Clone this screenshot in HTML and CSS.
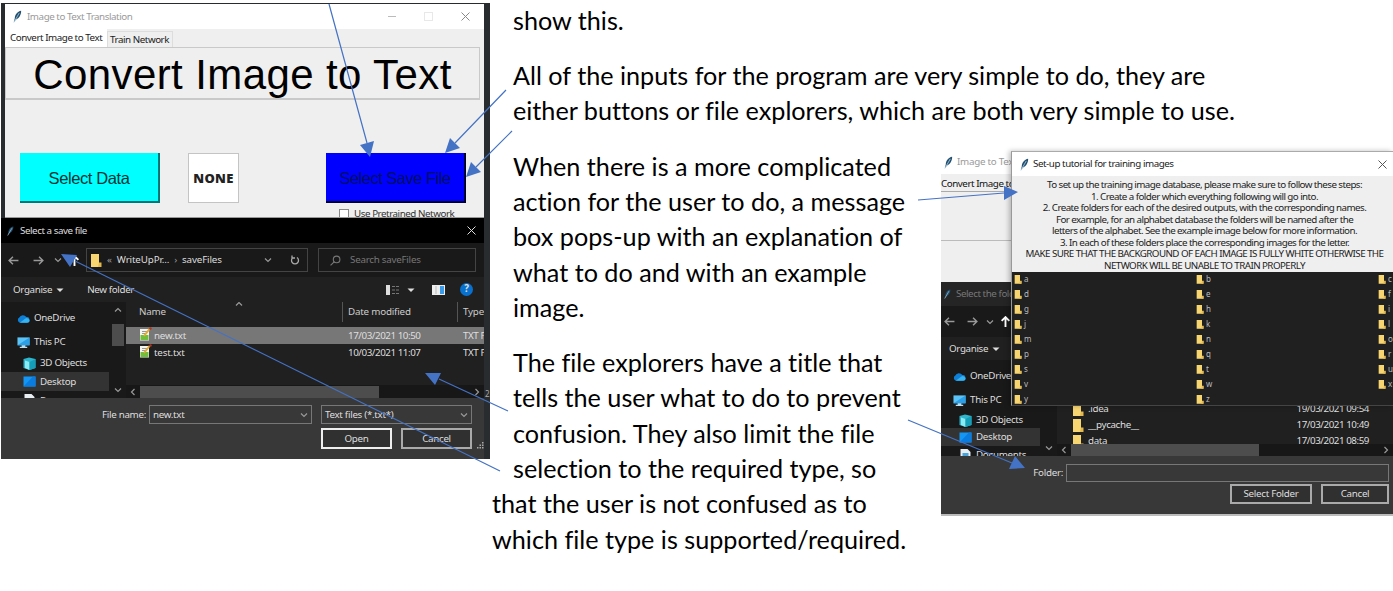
FILE: index.html
```
<!DOCTYPE html>
<html lang="en">
<head>
<meta charset="utf-8">
<title>Image to Text Translation</title>
<link rel="stylesheet" href="styles.css">
</head>
<body>
<svg class="defs" width="0" height="0">
  <defs>
    <symbol id="feather" viewBox="0 0 10 14"><path d="M1 13 2 9C2 5 5 1 9 0.500C9.500 4 7 9 3 10.500Z" fill="#24506f"/><path d="M1 13.500 7 3" stroke="#9fc4dd" stroke-width="1" fill="none"/></symbol>
    <symbol id="folder" viewBox="0 0 12 14"><path d="M1 1h8v9h2v4H1z" fill="#f7d671"/><path d="M9 9.500h2.500V14H8z" fill="#e3b94f"/></symbol>
    <symbol id="cloud" viewBox="0 0 14 9"><path d="M3 9a3 3 0 0 1-.5-5.500A4.200 4.200 0 0 1 10 3a3 3 0 0 1 1 6z" fill="#0f7fd6"/><path d="M3 9 9 4.500a3 3 0 0 1 4.500 2.500Q13.500 9 11 9z" fill="#36b4f2"/></symbol>
    <symbol id="pc" viewBox="0 0 14 12"><path d="M0.500 0.500h13v8.500H.5z" fill="#5cc3f7"/><path d="M.5 9 13.500.5V9z" fill="#2ba0ea"/><path d="M5 9h4v1.500h2V12H3v-1.500h2z" fill="#b9dff2"/></symbol>
    <symbol id="cube" viewBox="0 0 13 13"><path d="M.5 2 6 .5l6.500 1.500v9L6.500 13 .5 11z" fill="#2fb6cd"/><path d="M2 3.500 6.500 5v8L2 11z" fill="#8ceaf2"/><path d="M6.500 5 12.500 2v9l-6 2z" fill="#159eb8"/></symbol>
    <symbol id="desk" viewBox="0 0 13 10"><path d="M.5 0h12v10H.5z" fill="#1496f5"/><path d="M.5 10 10 0h2.500v10z" fill="#0a7bdf"/></symbol>
    <symbol id="doc" viewBox="0 0 12 13"><path d="M1 0h7l3 3v10H1z" fill="#e9eef2"/><path d="M3 4h6v5H3z" fill="#4aa3d9"/></symbol>
    <symbol id="note" viewBox="0 0 13 14"><path d="M1 2h9v11.500H1z" fill="#f3f5ee"/><path d="M1.500 8h8v5h-8z" fill="#6fbf3a"/><path d="M3 4.500h5M3 6.500h4" stroke="#999"/><path d="M5 9 10.500 2" stroke="#e2a936" stroke-width="2"/><circle cx="11.500" cy="1.500" r="1.200" fill="#b63224"/></symbol>
    <symbol id="left" viewBox="0 0 10 10"><path d="M9.500 5H1M4.500 1.500 1 5l3.500 3.500" fill="none" stroke="currentColor" stroke-width="1.300"/></symbol>
    <symbol id="right" viewBox="0 0 10 10"><path d="M.5 5H9M5.500 1.500 9 5 5.500 8.500" fill="none" stroke="currentColor" stroke-width="1.300"/></symbol>
    <symbol id="up" viewBox="0 0 10 10"><path d="M5 10V1M1.500 4.500 5 1l3.500 3.500" fill="none" stroke="currentColor" stroke-width="1.700"/></symbol>
    <symbol id="chev" viewBox="0 0 8 8"><path d="M1 2.500 4 5.500 7 2.500" fill="none" stroke="currentColor" stroke-width="1.200"/></symbol>
    <symbol id="tri" viewBox="0 0 8 8"><path d="M.5 2.500h7L4 6z" fill="currentColor"/></symbol>
    <symbol id="x" viewBox="0 0 9 9"><path d="M.5.5l8 8M8.500.5l-8 8" fill="none" stroke="currentColor"/></symbol>
  </defs>
</svg>
<main class="page">
  <figure class="shot shot-left">
    <section class="app">
      <header class="app-title"><svg class="feather"><use href="#feather"/></svg><span>Image to Text Translation</span>
        <div class="controls"><i class="minimise"></i><i class="maximise"></i><svg class="close"><use href="#x"/></svg></div></header>
      <nav class="tabs"><span class="tab active">Convert Image to Text</span><span class="tab">Train Network</span></nav>
      <h1 class="app-heading">Convert Image to Text</h1>
      <div class="app-actions">
        <div class="big-button cyan">Select Data</div>
        <div class="none">NONE</div>
        <div class="big-button blue">Select Save File</div>
      </div>
      <div class="pretrained"><i class="checkbox"></i><span>Use Pretrained Network</span></div>
    </section>
    <section class="dialog">
      <header class="dialog-title"><svg class="feather"><use href="#feather"/></svg><span>Select a save file</span><svg class="close"><use href="#x"/></svg></header>
      <div class="address">
        <svg class="nav-icon"><use href="#left"/></svg><svg class="nav-icon fwd"><use href="#right"/></svg><svg class="chev"><use href="#chev"/></svg><svg class="nav-icon upward"><use href="#up"/></svg>
        <div class="path"><svg class="path-folder"><use href="#folder"/></svg><span class="dim">«</span><span class="crumb">WriteUpPr...</span><span class="dim">›</span><span class="crumb">saveFiles</span><svg class="chev path-chev"><use href="#chev"/></svg>
          <svg class="refresh" viewBox="0 0 10 10"><path d="M3 2.500A3.500 3.500 0 1 0 7 2.500M2 .5V3h3" fill="none" stroke="currentColor" stroke-width="1.300"/></svg></div>
        <div class="search"><svg class="lens" viewBox="0 0 10 10"><circle cx="6" cy="4" r="3" fill="none" stroke="currentColor"/><path d="M4 6 .5 9.500" stroke="currentColor"/></svg><span>Search saveFiles</span></div>
      </div>
      <div class="toolbar"><span class="organise">Organise</span><svg class="tri"><use href="#tri"/></svg><span class="new-folder">New folder</span>
        <div class="tools"><svg class="list-icon" viewBox="0 0 14 10"><path d="M0 0h4v10H0z" fill="#ddd"/><path d="M6 1.500h3M10 1.500h3M6 5h3M10 5h3M6 8.500h3M10 8.500h3" stroke="#777"/></svg><svg class="tri"><use href="#tri"/></svg><svg class="pane-icon" viewBox="0 0 13 10"><path d="M0 0h13v10H0z" fill="#eee"/><path d="M8 1h4v8H8z" fill="#3b9be6"/><path d="M4 1v8" stroke="#bbb"/></svg><b class="help">?</b></div></div>
      <div class="browser">
        <div class="tree">
          <div class="tree-row one"><svg class="ico"><use href="#cloud"/></svg>OneDrive</div>
          <div class="tree-row pc-row"><svg class="ico"><use href="#pc"/></svg>This PC</div>
          <div class="tree-row child"><svg class="ico"><use href="#cube"/></svg>3D Objects</div>
          <div class="tree-row child selected"><svg class="ico"><use href="#desk"/></svg>Desktop</div>
          <div class="tree-row child"><svg class="ico"><use href="#doc"/></svg>Documents</div>
        </div>
        <div class="vscroll"><svg class="chev flip"><use href="#chev"/></svg><i class="vthumb"></i><svg class="chev last"><use href="#chev"/></svg></div>
        <div class="files">
          <div class="file-head"><span>Name</span><span class="rule">Date modified</span><span class="rule">Type</span><svg class="chev flip sort"><use href="#chev"/></svg></div>
          <div class="file-row picked"><span class="fname"><svg class="note"><use href="#note"/></svg>new.txt</span><span>17/03/2021 10:50</span><span>TXT F</span></div>
          <div class="file-row"><span class="fname"><svg class="note"><use href="#note"/></svg>test.txt</span><span>10/03/2021 11:07</span><span>TXT F</span></div>
          <div class="hscroll"><svg class="chev west"><use href="#chev"/></svg><i class="hthumb"></i><svg class="chev east"><use href="#chev"/></svg></div>
        </div>
      </div>
      <footer class="dialog-footer">
        <div class="field-row"><label>File name:</label><div class="field name-field">new.txt<svg class="chev"><use href="#chev"/></svg></div><div class="field type-field">Text files (*.txt*)<svg class="chev"><use href="#chev"/></svg></div></div>
        <div class="button-row"><span class="btn primary">Open</span><span class="btn">Cancel</span><svg class="grip" viewBox="0 0 7 7"><path d="M5 0h1.500v1.500H5zM2.500 2.500H4V4H2.500zM5 2.500h1.500V4H5zM0 5h1.500v1.500H0zM2.500 5H4v1.500H2.500zM5 5h1.500v1.500H5z" fill="#aaa"/></svg></div>
      </footer>
    </section>
    <span class="stray">2</span>
  </figure>

  <div class="content">
    <article class="wide">
      <p><span class="ln">show this.</span></p>
      <p><span class="ln">All of the inputs for the program are very simple to do, they are</span><span class="ln">either buttons or file explorers, which are both very simple to use.</span></p>
    </article>
    <div class="lower">
      <article class="narrow">
        <p><span class="ln">When there is a more complicated</span><span class="ln">action for the user to do, a message</span><span class="ln">box pops-up with an explanation of</span><span class="ln">what to do and with an example</span><span class="ln">image.</span></p>
        <p><span class="ln">The file explorers have a title that</span><span class="ln">tells the user what to do to prevent</span><span class="ln">confusion. They also limit the file</span><span class="ln">selection to the required type, so</span><span class="ln outdent">that the user is not confused as to</span><span class="ln outdent">which file type is supported/required.</span></p>
      </article>
      <figure class="shot shot-right">
        <section class="app-behind">
          <header class="app-title"><svg class="feather"><use href="#feather"/></svg><span>Image to Text</span></header>
          <div class="behind-tab">Convert Image to</div>
          <div class="behind-box"></div>
        </section>
        <section class="dialog folder-dialog">
          <header class="dialog-title"><svg class="feather"><use href="#feather"/></svg><span>Select the folder</span></header>
          <div class="address"><svg class="nav-icon"><use href="#left"/></svg><svg class="nav-icon fwd"><use href="#right"/></svg><svg class="chev"><use href="#chev"/></svg><svg class="nav-icon upward"><use href="#up"/></svg></div>
          <div class="toolbar"><span class="organise">Organise</span><svg class="tri"><use href="#tri"/></svg></div>
          <div class="browser">
            <div class="tree">
              <div class="tree-row one"><svg class="ico"><use href="#cloud"/></svg>OneDrive</div>
              <div class="tree-row pc-row"><svg class="ico"><use href="#pc"/></svg>This PC</div>
              <div class="tree-row child"><svg class="ico"><use href="#cube"/></svg>3D Objects</div>
              <div class="tree-row child selected"><svg class="ico"><use href="#desk"/></svg>Desktop</div>
              <div class="tree-row child"><svg class="ico"><use href="#doc"/></svg>Documents</div>
            </div>
            <div class="vscroll"><svg class="chev last"><use href="#chev"/></svg></div>
            <div class="files">
              <div class="folder-row"><svg class="dir"><use href="#folder"/></svg><span>.idea</span><span class="date">19/03/2021 09:54</span></div>
              <div class="folder-row"><svg class="dir"><use href="#folder"/></svg><span>__pycache__</span><span class="date">17/03/2021 10:49</span></div>
              <div class="folder-row"><svg class="dir"><use href="#folder"/></svg><span>data</span><span class="date">17/03/2021 08:59</span></div>
              <div class="hscroll"><svg class="chev west"><use href="#chev"/></svg><i class="hthumb"></i><svg class="chev east"><use href="#chev"/></svg></div>
            </div>
          </div>
          <footer class="dialog-footer">
            <div class="field-row"><label>Folder:</label><div class="field"></div></div>
            <div class="button-row"><span class="btn select-folder">Select Folder</span><span class="btn">Cancel</span></div>
          </footer>
        </section>
        <section class="popup">
          <header class="popup-title"><svg class="feather"><use href="#feather"/></svg><span>Set-up tutorial for training images</span><svg class="close"><use href="#x"/></svg></header>
          <div class="steps">
            <span>To set up the training image database, please make sure to follow these steps:</span>
            <span>1. Create a folder which everything following will go into.</span>
            <span>2. Create folders for each of the desired outputs, with the corresponding names.</span>
            <span>For example, for an alphabet database the folders will be named after the</span>
            <span>letters of the alphabet. See the example image below for more information.</span>
            <span>3. In each of these folders place the corresponding images for the letter.</span>
            <span class="caps">MAKE SURE THAT THE BACKGROUND OF EACH IMAGE IS FULLY WHITE OTHERWISE THE</span>
            <span class="caps">NETWORK WILL BE UNABLE TO TRAIN PROPERLY</span>
          </div>
          <div class="letters">
            <span><svg><use href="#folder"/></svg>a</span><span><svg><use href="#folder"/></svg>b</span><span><svg><use href="#folder"/></svg>c</span>
            <span><svg><use href="#folder"/></svg>d</span><span><svg><use href="#folder"/></svg>e</span><span><svg><use href="#folder"/></svg>f</span>
            <span><svg><use href="#folder"/></svg>g</span><span><svg><use href="#folder"/></svg>h</span><span><svg><use href="#folder"/></svg>i</span>
            <span><svg><use href="#folder"/></svg>j</span><span><svg><use href="#folder"/></svg>k</span><span><svg><use href="#folder"/></svg>l</span>
            <span><svg><use href="#folder"/></svg>m</span><span><svg><use href="#folder"/></svg>n</span><span><svg><use href="#folder"/></svg>o</span>
            <span><svg><use href="#folder"/></svg>p</span><span><svg><use href="#folder"/></svg>q</span><span><svg><use href="#folder"/></svg>r</span>
            <span><svg><use href="#folder"/></svg>s</span><span><svg><use href="#folder"/></svg>t</span><span><svg><use href="#folder"/></svg>u</span>
            <span><svg><use href="#folder"/></svg>v</span><span><svg><use href="#folder"/></svg>w</span><span><svg><use href="#folder"/></svg>x</span>
            <span><svg><use href="#folder"/></svg>y</span><span><svg><use href="#folder"/></svg>z</span>
          </div>
        </section>
      </figure>
    </div>
  </div>
  <svg class="arrows" viewBox="0 0 1393 591">
    <g fill="none" stroke="#4472c4" stroke-width="1.200">
      <path d="M329 4 367 143M506 90 455 143M512 131 476 167M918 200 1004 193M508 411 439 379M500 471 75 261M908 420 1012 463"/>
    </g>
    <g fill="#4472c4">
      <path d="M370 157 360 145 374 141ZM445 153 450 138 460 148ZM466 177 471 162 481 172ZM1018 192 1004 186 1004 200ZM425 373 441 373 435 385ZM61 254 77 255 70 267ZM1025 468 1015 456 1009 469Z"/>
    </g>
  </svg>
</main>
</body>
</html>
```
FILE: styles.css
```
* { box-sizing: border-box; }
body { margin: 0; background: #fff; }
svg { display: block; flex: none; }
.defs { position: absolute; }
figure, p, h1 { margin: 0; }
.page { position: relative; display: flex; width: 1393px; height: 591px; overflow: hidden; }
.shot { font: 9.800px/12px "Noto Sans", "Open Sans", sans-serif; letter-spacing: -0.450px; white-space: nowrap; flex: none; }
.arrows { position: absolute; inset: 0; width: 1393px; height: 591px; }

/* document text */
.content { flex: none; width: 903px; padding-top: 3px; }
.wide, .narrow { font: 25.200px/35.400px Lato, sans-serif; font-variant-ligatures: none; color: #000; white-space: nowrap; }
.wide { height: 147px; padding-left: 23px; }
.wide p, .narrow p { margin-bottom: 19.200px; }
.ln { display: block; }
.lower { display: flex; }
.narrow { width: 451px; padding-left: 23px; margin-top: -1.500px; }
.outdent { margin-left: -21px; }

/* left capture */
.shot-left { position: relative; width: 490px; height: 456px; margin-top: 3px; border-left: 1px solid #fff; background: #292c2e; padding-top: 1px; }
.app { width: 479px; height: 214px; margin-left: 4px; background: #efefef; border-bottom: 1px solid #999; overflow: hidden; }
.app-title { display: flex; align-items: center; height: 25px; background: #fff; color: #9a9a9a; padding-left: 8px; }
.feather { width: 9px; height: 13px; margin-right: 5px; }
.controls { display: flex; align-items: center; gap: 28px; margin-left: auto; padding-right: 14px; color: #888; }
.minimise { width: 8px; height: 1px; background: #bbb; }
.maximise { width: 9px; height: 9px; border: 1px solid #e8e8e8; }
.close { width: 9px; height: 9px; }
.tabs { display: flex; align-items: flex-end; height: 18px; color: #222; }
.tab { height: 16px; padding: 2px 3px 0 2px; border: 1px solid #ddd; border-bottom: 0; }
.tab.active { height: 18px; background: #fff; border: 0; width: 102px; padding: 3px 0 0 5px; }
.app-heading { width: 475px; height: 53px; border: 2px solid #c9c9c9; border-width: 1px 1px 2px; font: 42px/53px "Liberation Sans", sans-serif; letter-spacing: 0.400px; text-align: center; color: #000; }
.app-actions { display: flex; padding: 53px 0 0 15px; }
.big-button { width: 140px; height: 50px; font: 16.500px/50px "Liberation Sans", sans-serif; letter-spacing: -0.400px; text-align: center; border: 1px solid #077; border-width: 0 2px 2px 0; }
.cyan { background: #0ff; color: #033; }
.blue { background: #00f; color: #001060; border-color: #003; margin-left: 87px; letter-spacing: -0.500px; }
.none { width: 51px; height: 50px; margin-left: 28px; background: #fff; border: 1px solid #c4c4c4; font: 800 13px/49px "Open Sans", sans-serif; color: #222; text-align: center; letter-spacing: 0.300px; }
.pretrained { display: flex; padding: 5px 0 0 334px; color: #333; }
.checkbox { width: 10px; height: 10px; margin: 1px 5px 0 0; background: #fff; border: 1px solid #888; }
.stray { position: absolute; left: 484px; top: 385px; color: #aaa; font-size: 8px; }

/* file dialogs */
.dialog { width: 483px; height: 241px; background: #202020; color: #dedede; overflow: hidden; }
.dialog-title { display: flex; align-items: center; height: 25px; background: #000; padding: 0 8px 0 6px; }
.dialog-title .feather { width: 7px; height: 10px; margin-right: 6px; }
.dialog-title .close { margin-left: auto; }
.address { display: flex; align-items: center; height: 34px; background: #191919; padding-left: 7px; color: #999; }
.nav-icon { width: 11px; height: 11px; }
.fwd { margin: 0 10px 0 14px; }
.chev { width: 8px; height: 8px; color: #999; }
.upward { margin-left: 7px; margin-right: 6px; color: #fff; }
.path { display: flex; align-items: center; width: 222px; height: 24px; border: 1px solid #444; padding-left: 3px; gap: 5px; color: #ddd; letter-spacing: -0.150px; }
.path-folder { width: 12px; height: 14px; }
.dim { color: #999; }
.path-chev { margin-left: auto; }
.refresh { width: 10px; height: 10px; margin: 0 7px 0 13px; color: #aaa; }
.search { display: flex; align-items: center; width: 158px; height: 24px; border: 1px solid #444; margin-left: 10px; padding-left: 11px; gap: 9px; color: #777; letter-spacing: -0.250px; }
.lens { width: 11px; height: 11px; }
.toolbar { display: flex; align-items: center; height: 25px; padding-left: 12px; letter-spacing: -0.350px; }
.tri { width: 8px; height: 8px; margin-left: 4px; }
.new-folder { margin-left: 23px; }
.tools { display: flex; align-items: center; margin-left: auto; padding-right: 11px; }
.list-icon { width: 14px; height: 10px; margin-right: 3px; }
.pane-icon { width: 13px; height: 10px; margin: 0 15px 0 17px; }
.help { width: 13px; height: 13px; border-radius: 50%; background: #0870cf; text-align: center; }
.browser { display: flex; height: 96px; overflow: hidden; }
.tree { width: 108px; background: #191919; padding-top: 6px; flex: none; }
.tree-row { display: flex; align-items: center; height: 19px; padding-left: 16px; gap: 4px; letter-spacing: -0.300px; }
.one { height: 20px; }
.pc-row { height: 28px; }
.pc-row + .child { height: 14px; margin-bottom: 2px; }
.child { padding-left: 22px; }
.selected { background: #333; }
.ico { width: 13px; height: 13px; }
.vscroll { width: 17px; background: #191919; display: flex; flex-direction: column; align-items: center; padding: 4px 0; flex: none; }
.vthumb { width: 12px; height: 22px; margin-top: 10px; background: #4d4d4d; }
.last { margin-top: auto; }
.flip { transform: rotate(180deg); }
.west { transform: rotate(90deg); }
.east { transform: rotate(-90deg); margin-left: auto; }
.files { flex: 1; display: flex; flex-direction: column; overflow: hidden; }
.file-head, .file-row { display: grid; grid-template-columns: 209px 115px 30px; padding-left: 13px; flex: none; }
.file-head { position: relative; height: 25px; line-height: 20px; color: #ccc; letter-spacing: -0.200px; }
.rule { border-left: 1px solid #555; height: 20px; padding-left: 5px; margin-left: -6px; }
.sort { position: absolute; left: 109px; top: -2px; }
.file-row { height: 17px; line-height: 17px; }
.picked { background: #777; }
.fname { display: flex; gap: 2px; letter-spacing: -0.200px; }
.note { width: 13px; height: 14px; }
.hscroll { display: flex; align-items: center; height: 13px; background: #171717; margin-top: auto; padding: 0 3px; }
.hthumb { width: 239px; height: 12px; background: #4d4d4d; margin-left: 3px; }
.dialog-footer { height: 61px; background: #383838; padding-top: 7px; }
.field-row { display: flex; align-items: center; height: 19px; letter-spacing: -0.300px; }
.field-row label { width: 148px; text-align: right; padding-right: 3px; }
.field { display: flex; align-items: center; justify-content: space-between; height: 19px; border: 1px solid #777; padding: 0 3px; }
.name-field { width: 163px; }
.type-field { width: 151px; margin-left: 9px; }
.button-row { display: flex; gap: 9px; padding: 4px 0 0 320px; letter-spacing: -0.300px; }
.btn { width: 71px; height: 21px; border: 2px solid #aaa; background: #303030; line-height: 17px; text-align: center; }
.primary { border-color: #eee; }
.grip { width: 7px; height: 7px; margin-top: 14px; margin-left: -4px; }

/* right capture */
.shot-right { position: relative; width: 452px; height: 366px; background: #bbb; }
.app-behind { height: 132px; background: #efefef; }
.app-behind .app-title { height: 24px; padding-left: 3px; letter-spacing: -0.250px; }
.app-behind .feather { margin-right: 4px; }
.behind-tab { height: 18px; padding-top: 4px; border-bottom: 1px solid #aaa; color: #111; }
.behind-box { height: 49px; border-bottom: 1px solid #bbb; }
.folder-dialog { width: 452px; height: 232px; }
.folder-dialog .dialog-title { height: 24px; background: #252525; color: #777; padding-left: 3px; }
.folder-dialog .dialog-title .feather { margin-right: 5px; }
.folder-dialog .address { height: 31px; padding-left: 3px; }
.folder-dialog .fwd { margin: 0 8px 0 12px; }
.folder-dialog .upward { margin-left: 6px; }
.folder-dialog .toolbar { height: 23px; padding-left: 8px; }
.folder-dialog .browser { height: 96px; }
.folder-dialog .tree { width: 99px; }
.folder-dialog .tree-row { height: 18px; padding-left: 12px; }
.folder-dialog .one { height: 20px; }
.folder-dialog .pc-row { height: 28px; }
.folder-dialog .pc-row + .child { height: 12px; }
.folder-dialog .tree-row.child { padding-left: 18px; }
.folder-dialog .files { padding-top: 41px; }
.folder-row { display: flex; align-items: center; height: 16px; padding-left: 15px; gap: 4px; flex: none; letter-spacing: -0.350px; }
.dir { width: 12px; height: 14px; }
.date { margin-left: auto; padding-right: 28px; letter-spacing: -0.450px; margin-right: -4px; }
.folder-dialog .hscroll { position: relative; flex: none; margin-top: -5px; height: 12px; }
.folder-dialog .hthumb { width: 188px; }
.folder-dialog .dialog-footer { height: 58px; }
.folder-dialog .field-row label { width: 125px; }
.folder-dialog .field { width: 323px; height: 18px; }
.folder-dialog .button-row { padding: 2px 0 0 289px; }
.select-folder { width: 82px; }
.folder-dialog .btn { height: 20px; line-height: 16px; }
.folder-dialog .btn:last-child { width: 68px; }

/* message box */
.popup { position: absolute; left: 70px; top: 1px; width: 382px; height: 255px; background: #202020; border-top: 1px solid #aaa; border-left: 1px solid #999; border-bottom: 1px solid #444; box-shadow: -2px 0 5px rgba(0,0,0,.25); overflow: hidden; }
.popup-title { display: flex; align-items: center; height: 24px; background: #fff; color: #222; padding: 0 6px 0 8px; }
.popup-title .feather { margin-right: 4px; }
.popup-title .close { margin-left: auto; color: #555; }
.steps { display: flex; flex-direction: column; align-items: center; height: 96px; padding: 3px 0 0 4px; background: #efefef; color: #222; line-height: 11.500px; letter-spacing: -0.570px; }
.letters { display: grid; grid-template-columns: 182px 182px 30px; grid-auto-rows: 14.950px; padding-left: 2px; color: #bbb; font-size: 8px; }
.letters span { display: flex; align-items: center; gap: 2px; }
.letters svg { width: 8px; height: 10px; }
```
